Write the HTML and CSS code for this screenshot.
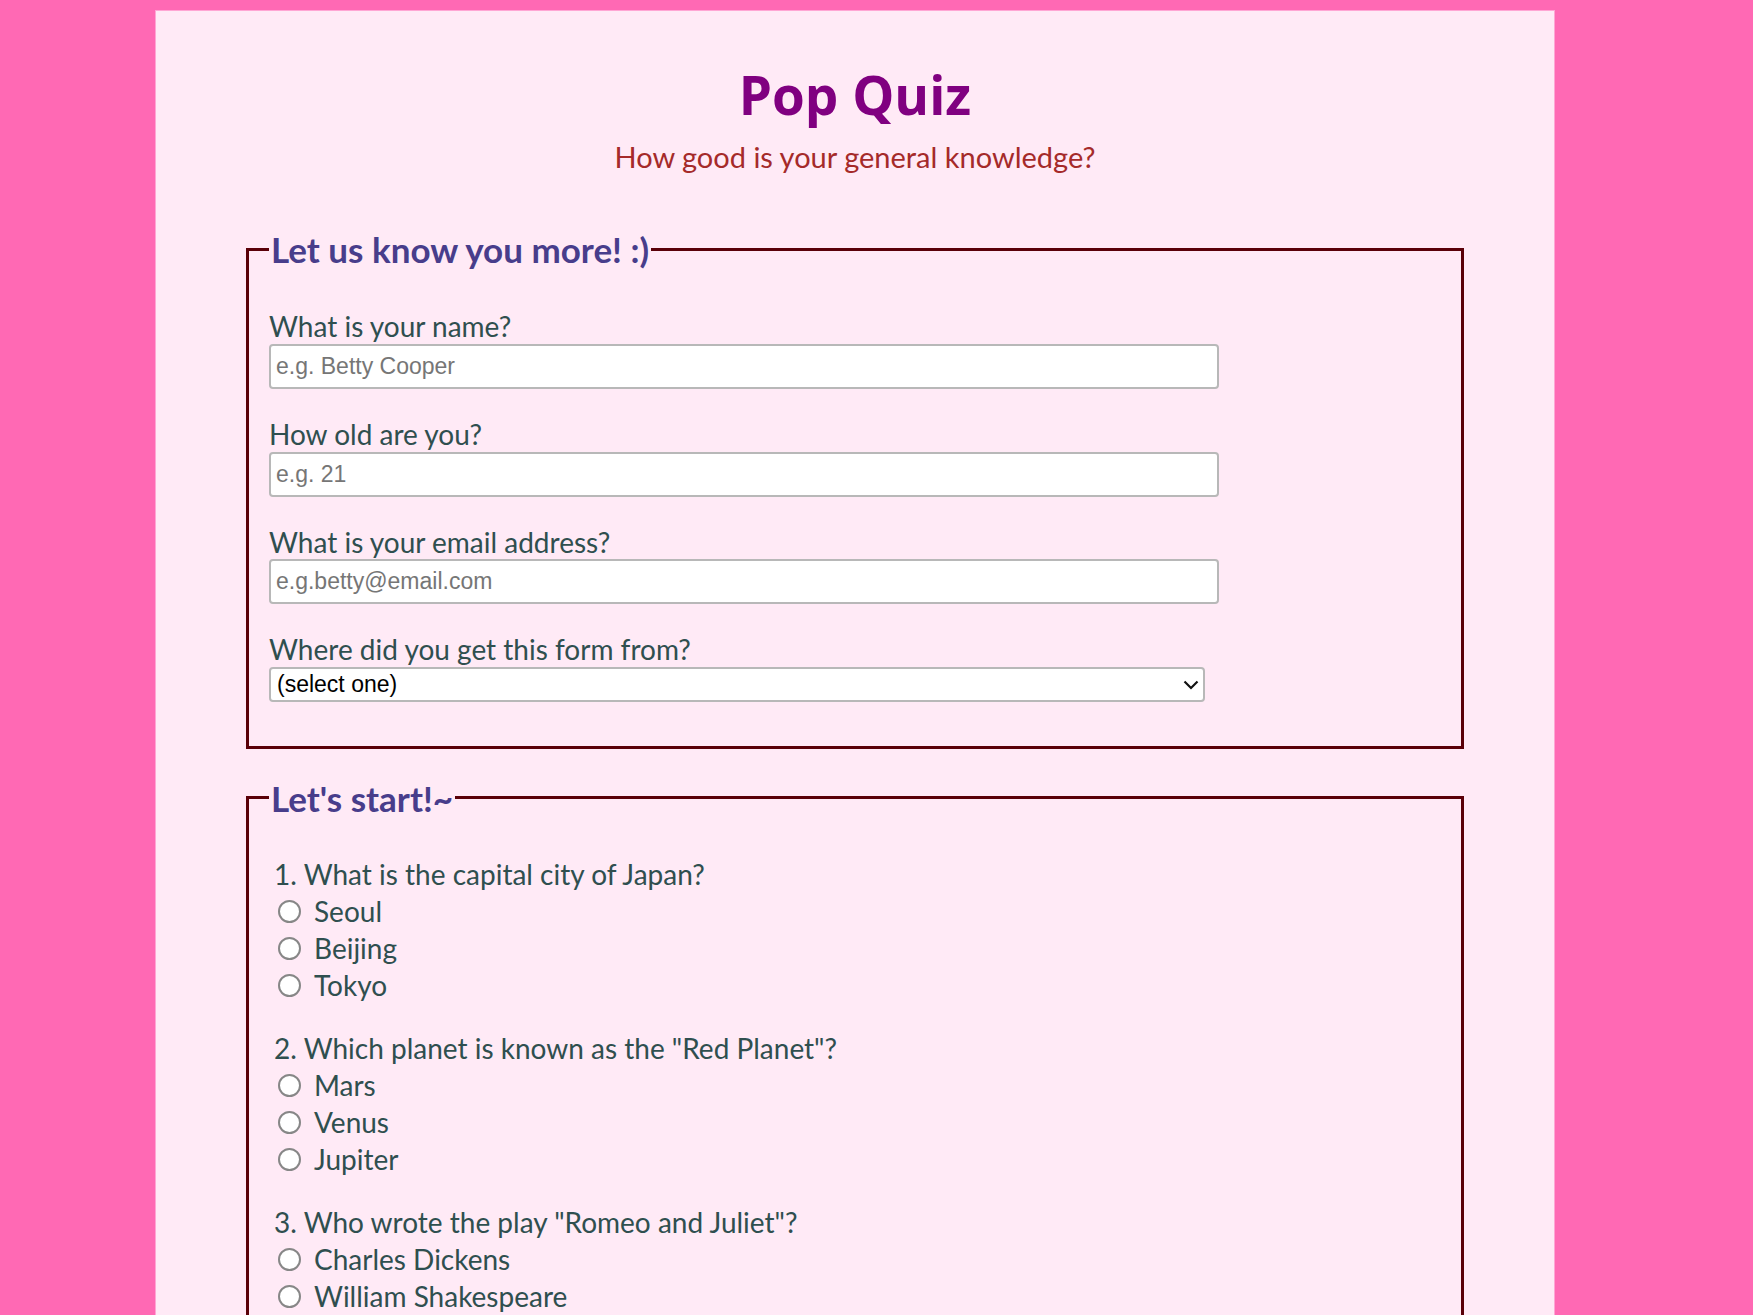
FILE: index.html
```html
<!DOCTYPE html>
<html lang="en">
<head>
<meta charset="utf-8">
<title>Pop Quiz</title>
<link rel="stylesheet" href="styles.css">
</head>
<body>
<div class="container">
  <header class="header">
    <h1 class="title">Pop Quiz</h1>
    <p class="subtitle">How good is your general knowledge?</p>
  </header>

  <form class="quiz-form">
    <fieldset class="box">
      <legend class="box-legend">Let us know you more! :)</legend>

      <div class="group">
        <label class="field-label" for="name">What is your name?</label>
        <input class="text-input" id="name" type="text" placeholder="e.g. Betty Cooper">
      </div>
      <div class="group">
        <label class="field-label" for="age">How old are you?</label>
        <input class="text-input" id="age" type="number" placeholder="e.g. 21">
      </div>
      <div class="group">
        <label class="field-label" for="email">What is your email address?</label>
        <input class="text-input" id="email" type="email" placeholder="e.g.betty@email.com">
      </div>
      <div class="group group-last">
        <label class="field-label" for="source">Where did you get this form from?</label>
        <div class="select-wrap">
          <select class="select" id="source">
            <option>(select one)</option>
            <option>Friends</option>
            <option>Social media</option>
            <option>Other</option>
          </select>
          <svg class="chevron" width="16" height="10" viewBox="0 0 16 10"><path d="M1.5 1.5 L8 8 L14.5 1.5" fill="none" stroke="#111" stroke-width="2.2"/></svg>
        </div>
      </div>
    </fieldset>

    <fieldset class="box box-quiz">
      <legend class="box-legend">Let's start!~</legend>

      <div class="question">
        <p class="q-text">1. What is the capital city of Japan?</p>
        <label class="option"><input class="radio" type="radio" name="q1">Seoul</label>
        <label class="option"><input class="radio" type="radio" name="q1">Beijing</label>
        <label class="option"><input class="radio" type="radio" name="q1">Tokyo</label>
      </div>

      <div class="question">
        <p class="q-text">2. Which planet is known as the "Red Planet"?</p>
        <label class="option"><input class="radio" type="radio" name="q2">Mars</label>
        <label class="option"><input class="radio" type="radio" name="q2">Venus</label>
        <label class="option"><input class="radio" type="radio" name="q2">Jupiter</label>
      </div>

      <div class="question">
        <p class="q-text">3. Who wrote the play "Romeo and Juliet"?</p>
        <label class="option"><input class="radio" type="radio" name="q3">Charles Dickens</label>
        <label class="option"><input class="radio" type="radio" name="q3">William Shakespeare</label>
        <label class="option"><input class="radio" type="radio" name="q3">Mark Twain</label>
      </div>
    </fieldset>
  </form>
</div>
</body>
</html>
```

FILE: styles.css
```css
html, body {
  margin: 0;
  padding: 0;
}

body {
  background: #ff69b4;
  font-family: "Lato", "Open Sans", sans-serif;
}

.container {
  box-sizing: border-box;
  width: 1400px;
  margin: 10px 0 0 155px;
  padding: 52px 90px 80px 90px;
  background: #ffeaf6;
  border: 1px solid #ffa6d4;
  border-bottom: none;
  min-height: 1400px;
}

.header {
  text-align: center;
}

.title {
  margin: 0;
  font-family: "Open Sans", sans-serif;
  font-weight: 700;
  font-size: 53px;
  line-height: 1.2;
  color: #800080;
}

.subtitle {
  margin: 13px 0 0 0;
  font-family: "Lato", sans-serif;
  font-size: 29px;
  line-height: 1.2;
  color: #a52a2a;
}

.quiz-form {
  margin-top: 53px;
}

.box {
  box-sizing: border-box;
  width: 100%;
  margin: 0;
  border: 3px solid #5a0008;
  padding: 39px 20px 44px 20px;
  min-width: 0;
}

.box-quiz {
  margin-top: 27px;
  padding-top: 36px;
}

.box-legend {
  padding: 0 2px;
  font-family: "Lato", sans-serif;
  font-weight: 700;
  font-size: 35px;
  line-height: 44px;
  color: #483d8b;
}

.group {
  margin-bottom: 29px;
}

.group-last {
  margin-bottom: 0;
}

.field-label {
  display: block;
  font-size: 28px;
  line-height: 1.2;
  color: #2f4f4f;
}

.text-input {
  display: block;
  box-sizing: border-box;
  width: 950px;
  height: 45px;
  margin: 0;
  padding: 0 5px;
  border: 2px solid #b8b8b8;
  border-radius: 4px;
  background: #fff;
  font-family: "Liberation Sans", Arial, sans-serif;
  font-size: 23px;
  color: #222;
  outline: none;
}

.text-input::placeholder {
  color: #767676;
}

.text-input::-webkit-outer-spin-button,
.text-input::-webkit-inner-spin-button {
  -webkit-appearance: none;
  margin: 0;
}

.select-wrap {
  position: relative;
  width: 936px;
}

.select {
  display: block;
  box-sizing: border-box;
  width: 936px;
  height: 35px;
  margin: 0;
  padding: 0 30px 0 6px;
  -webkit-appearance: none;
  appearance: none;
  border: 2px solid #b8b8b8;
  border-radius: 4px;
  background: #fff;
  font-family: "Liberation Sans", Arial, sans-serif;
  font-size: 23px;
  color: #000;
}

.chevron {
  position: absolute;
  right: 6px;
  top: 13px;
  pointer-events: none;
}

.question {
  padding-left: 5px;
  margin-bottom: 26px;
}

.q-text {
  margin: 0;
  font-size: 28px;
  line-height: 37px;
  color: #2f4f4f;
}

.option {
  display: flex;
  align-items: center;
  height: 37px;
  font-size: 28px;
  line-height: 37px;
  color: #2f4f4f;
}

.radio {
  -webkit-appearance: none;
  appearance: none;
  box-sizing: border-box;
  width: 23px;
  height: 23px;
  margin: 0 13px 0 4px;
  border: 2px solid #878787;
  border-radius: 50%;
  background: #fff;
  flex: none;
}
```
